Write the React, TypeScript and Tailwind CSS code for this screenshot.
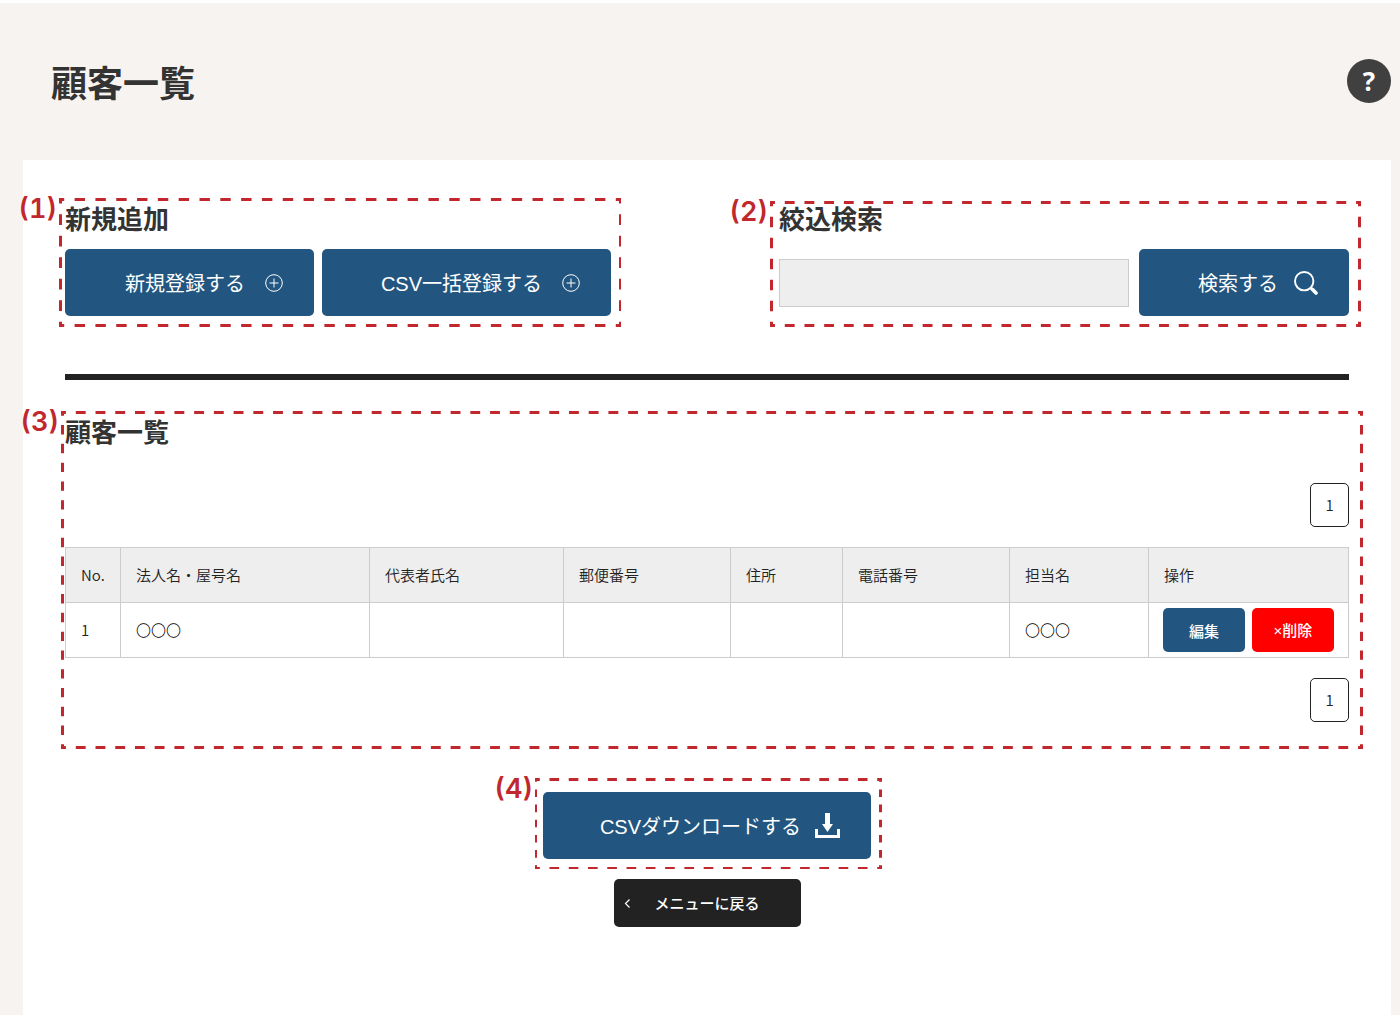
import type { ReactNode } from "react";

type FrameProps = {
  label: string;
  className: string;
  columns: number;
  rows: number;
  left?: number;
  right?: number;
  bottom?: number;
};

/* Dashed callout drawn around a part of the page. Each edge is clipped to the
   inner half of its stroke, so dashes always meet at the corners. */
function Frame({ label, className, columns, rows, left = 3, right = 3, bottom = 3 }: FrameProps) {
  const edge = { stroke: "#c1272d", strokeDasharray: "1 1", strokeDashoffset: 0.5 };
  return (
    <div className={`pointer-events-none absolute ${className}`}>
      <svg className="h-full w-full overflow-hidden" aria-hidden="true">
        <line {...edge} x1="0" y1="0" x2="100%" y2="0" strokeWidth={6} pathLength={columns * 2} />
        <line {...edge} x1="0" y1="100%" x2="100%" y2="100%" strokeWidth={bottom * 2} pathLength={columns * 2} />
        <line {...edge} x1="0" y1="0" x2="0" y2="100%" strokeWidth={left * 2} pathLength={rows * 2} />
        <line {...edge} x1="100%" y1="0" x2="100%" y2="100%" strokeWidth={right * 2} pathLength={rows * 2} />
      </svg>
      <span className="absolute -top-[3px] right-full mr-0.5 font-['Inter',sans-serif] text-[27px] leading-7 font-semibold whitespace-nowrap text-[#c1272d] tabular-nums">
        {label}
      </span>
    </div>
  );
}

function PlusCircle() {
  return (
    <svg className="size-[18px]" viewBox="0 0 18 18" fill="none" stroke="white" aria-hidden="true">
      <circle cx="9" cy="9" r="8.3" />
      <path d="M9 4.5v9M4.5 9h9" />
    </svg>
  );
}

function SearchIcon() {
  return (
    <svg className="size-6" viewBox="0 0 24 24" fill="none" stroke="white" aria-hidden="true">
      <circle cx="10.2" cy="10.2" r="9.2" strokeWidth="1.9" />
      <path d="M16.500 16.500l1.500 1.500" strokeWidth="2.400" />
      <path d="M18.300 18.300l3.700 3.700" strokeWidth="3.600" strokeLinecap="round" />
    </svg>
  );
}

function DownloadIcon() {
  return (
    <svg className="size-[25px]" viewBox="0 0 25 25" fill="white" aria-hidden="true">
      <path d="M10 0h5v11h3l-5.500 8-5.500-8h3z" />
      <path d="M0 16h3v6h19v-6h3v9H0z" />
    </svg>
  );
}

function MainButton({ className, children }: { className: string; children: ReactNode }) {
  return (
    <button
      type="button"
      className={`flex h-[67px] shrink-0 items-center justify-end rounded-[5px] bg-[#225680] font-['Liberation_Sans','Noto_Sans_CJK_JP',sans-serif] text-[20px] font-normal whitespace-nowrap text-white ${className}`}
    >
      {children}
    </button>
  );
}

/* The text of a main button sits slightly lower than its icon. */
function ButtonText({ children }: { children: ReactNode }) {
  return <span className="pt-0.5">{children}</span>;
}

function SectionTitle({ children }: { children: ReactNode }) {
  return <h2 className="mb-[13px] text-[26px] leading-[37px] font-bold text-[#333]">{children}</h2>;
}

function Pagination({ label }: { label: string }) {
  return (
    <nav aria-label={label} className="flex justify-end">
      <a
        href="#1"
        className="flex h-11 w-[39px] items-center justify-center rounded-[5px] border border-[#222] text-[15px]"
      >
        1
      </a>
    </nav>
  );
}

const columns = [
  { name: "No.", width: "w-[55px]" },
  { name: "法人名・屋号名", width: "w-[249px]" },
  { name: "代表者氏名", width: "w-[194px]" },
  { name: "郵便番号", width: "w-[167px]" },
  { name: "住所", width: "w-[112px]" },
  { name: "電話番号", width: "w-[167px]" },
  { name: "担当名", width: "w-[139px]" },
  { name: "操作", width: "w-[200px]" },
];

const customers = [["1", "〇〇〇", "", "", "", "", "〇〇〇"]];

export default function App() {
  return (
    <div
      lang="ja"
      className="flex min-h-screen flex-col border-t-[3px] border-white bg-[#f7f3f0] font-['Noto_Sans_CJK_JP',sans-serif] font-[350] text-[#222]"
    >
      <header className="flex h-[157px] items-center justify-between pr-[9px] pb-0.5 pl-[51px]">
        <h1 className="text-[36px] font-bold text-[#333]">顧客一覧</h1>
        <button
          type="button"
          aria-label="ヘルプ"
          className="flex size-11 items-center justify-center rounded-full bg-[#404040] font-['Open_Sans',sans-serif] text-[26px] leading-none font-bold text-white"
        >
          ?
        </button>
      </header>

      <main className="mr-[9px] ml-[23px] grow bg-white px-[42px] pt-[39px] pb-[88px]">
        <div className="flex items-start justify-between">
          <section className="relative">
            <SectionTitle>新規追加</SectionTitle>
            <div className="flex gap-2">
              <MainButton className="w-[249px] gap-5 pr-[31px]">
                <ButtonText>新規登録する</ButtonText>
                <PlusCircle />
              </MainButton>
              <MainButton className="w-[289px] gap-5 pr-[31px]">
                <ButtonText>CSV一括登録する</ButtonText>
                <PlusCircle />
              </MainButton>
            </div>
            <Frame label="(1)" className="-top-px -right-2.5 -bottom-[11px] -left-1.5" columns={27} rows={6} right={2} />
          </section>

          <section className="relative">
            <SectionTitle>
              <label htmlFor="keyword">絞込検索</label>
            </SectionTitle>
            <form className="flex items-center gap-2.5" onSubmit={(e) => e.preventDefault()}>
              <input
                id="keyword"
                type="text"
                className="h-12 w-[350px] border border-[#ccc] bg-[#eee] px-3 text-[15px]"
              />
              <MainButton className="w-[210px] gap-4 pr-[31px]">
                <ButtonText>検索する</ButtonText>
                <SearchIcon />
              </MainButton>
            </form>
            <Frame label="(2)" className="top-0.5 -right-3 -bottom-[11px] -left-[9px]" columns={30} rows={6} />
          </section>
        </div>

        <hr className="mt-[58px] border-t-[6px] border-[#222]" />

        <section className="relative mt-8 pb-px">
          <SectionTitle>顧客一覧</SectionTitle>
          <div className="pt-[21px]">
            <Pagination label="ページ送り（上）" />
          </div>
          <table className="my-5 w-full table-fixed border-collapse text-left text-[15px]">
            <thead>
              <tr className="h-[55px] bg-[#eee]">
                {columns.map((c) => (
                  <th key={c.name} scope="col" className={`border border-[#ccc] px-[15px] font-[350] ${c.width}`}>
                    {c.name}
                  </th>
                ))}
              </tr>
            </thead>
            <tbody>
              {customers.map((row) => (
                <tr key={row[0]} className="h-[55px]">
                  {row.map((cell, i) => (
                    <td
                      key={columns[i].name}
                      className={`border border-[#ccc] px-[15px] ${i === 0 ? "" : "font-light text-black"}`}
                    >
                      {cell}
                    </td>
                  ))}
                  <td className="border border-[#ccc] px-3.5">
                    <div className="flex gap-[7px] font-medium text-white">
                      <button type="button" className="h-11 w-[82px] rounded-[5px] bg-[#225680] pt-0.5">
                        編集
                      </button>
                      <button
                        type="button"
                        className="h-11 w-[82px] rounded-[5px] bg-[#f00] pt-[3px] font-['Liberation_Sans','Noto_Sans_CJK_JP',sans-serif]"
                      >
                        ×削除
                      </button>
                    </div>
                  </td>
                </tr>
              ))}
            </tbody>
          </table>
          <Pagination label="ページ送り（下）" />
          <Frame label="(3)" className="-top-px -right-3.5 -bottom-[26px] -left-1" columns={66} rows={18} />
        </section>

        <div className="mt-[69px] flex flex-col items-center gap-5">
          <div className="relative">
            <MainButton className="w-[328px] gap-3.5 pr-[31px]">
              <ButtonText>CSVダウンロードする</ButtonText>
              <DownloadIcon />
            </MainButton>
            <Frame
              label="(4)"
              className="-top-3.5 -right-[11px] -bottom-2.5 -left-2"
              columns={18}
              rows={6}
              left={2}
              bottom={2}
            />
          </div>
          <a
            href="#menu"
            className="flex h-12 w-[187px] items-center rounded-[5px] bg-[#222] px-2.5 text-[15px] font-medium text-white"
          >
            <svg className="mr-6 h-[9px] w-[7px]" viewBox="0 0 7 9" fill="none" stroke="white" strokeWidth="1.200" aria-hidden="true">
              <path d="M5.500 0.500l-4 4 4 4" />
            </svg>
            メニューに戻る
          </a>
        </div>
      </main>
    </div>
  );
}
